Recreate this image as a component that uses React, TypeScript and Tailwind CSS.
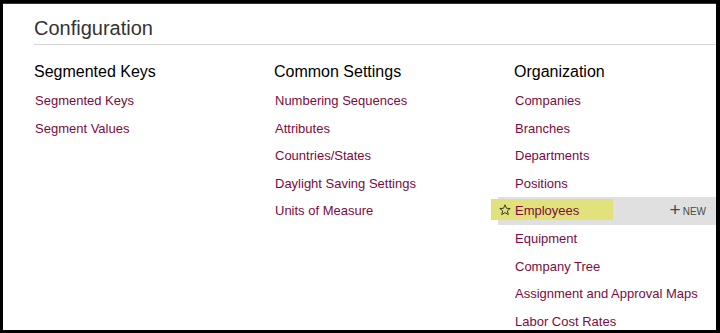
const columns = [
  { title: 'Segmented Keys', links: ['Segmented Keys', 'Segment Values'] },
  {
    title: 'Common Settings',
    links: ['Numbering Sequences', 'Attributes', 'Countries/States', 'Daylight Saving Settings', 'Units of Measure'],
  },
  {
    title: 'Organization',
    links: [
      'Companies',
      'Branches',
      'Departments',
      'Positions',
      'Employees',
      'Equipment',
      'Company Tree',
      'Assignment and Approval Maps',
      'Labor Cost Rates',
    ],
  },
];

function StarIcon() {
  return (
    <svg width="12" height="12" viewBox="0 0 12 12" className="shrink-0">
      <polygon
        points="6,0.8 7.5,4.3 11.2,4.5 8.3,6.9 9.3,10.6 6,8.6 2.7,10.6 3.7,6.9 0.8,4.5 4.5,4.3"
        fill="none"
        stroke="#3a3a2a"
        strokeWidth="1"
        strokeLinejoin="round"
      />
    </svg>
  );
}

function HighlightedRow({ label }: { label: string }) {
  return (
    <div className="relative -ml-[16px] w-[218px] h-[27.6px] bg-[#e0e0e0] flex items-center">
      <span className="absolute left-[-7px] top-[1.5px] w-[122px] h-[21px] bg-[#e2e27c]" />
      <span className="relative ml-[1px] mt-[-2px]">
        <StarIcon />
      </span>
      <span className="relative ml-[4px] text-[13px] text-[#7a0c3e]">{label}</span>
      <span className="relative ml-auto mr-[10px] flex items-center text-[#4a4a4a]">
        <span className="text-[19px] leading-none font-light mr-[2px] mt-[-3px]">+</span>
        <span className="text-[10px] leading-none mt-[1px]">NEW</span>
      </span>
    </div>
  );
}

export default function App() {
  return (
    <div className="w-[720px] h-[333px] bg-black pt-[3px] pl-[3px] pr-[4px] pb-[3px]">
      <div className="h-full bg-white border-t border-[#6d1a3c] overflow-hidden font-['Liberation_Sans',Arial,sans-serif]">
        <div className="ml-[31px] pt-[13px] h-[41px] border-b border-[#d4d4d4] text-[20px] leading-[23px] text-[#333]">
          Configuration
        </div>
        <div className="flex pl-[31px] mt-[17px]">
          {columns.map((col) => (
            <div key={col.title} className="w-[240px] shrink-0">
              <div className="h-[20px] leading-[20px] text-[16px] text-black">{col.title}</div>
              <div className="mt-[5px]">
                {col.links.map((link) =>
                  link === 'Employees' ? (
                    <HighlightedRow key={link} label={link} />
                  ) : (
                    <div key={link} className="h-[27.6px] flex items-center pl-[1px] text-[13px] text-[#7a0c3e]">
                      {link}
                    </div>
                  )
                )}
              </div>
            </div>
          ))}
        </div>
      </div>
    </div>
  );
}
